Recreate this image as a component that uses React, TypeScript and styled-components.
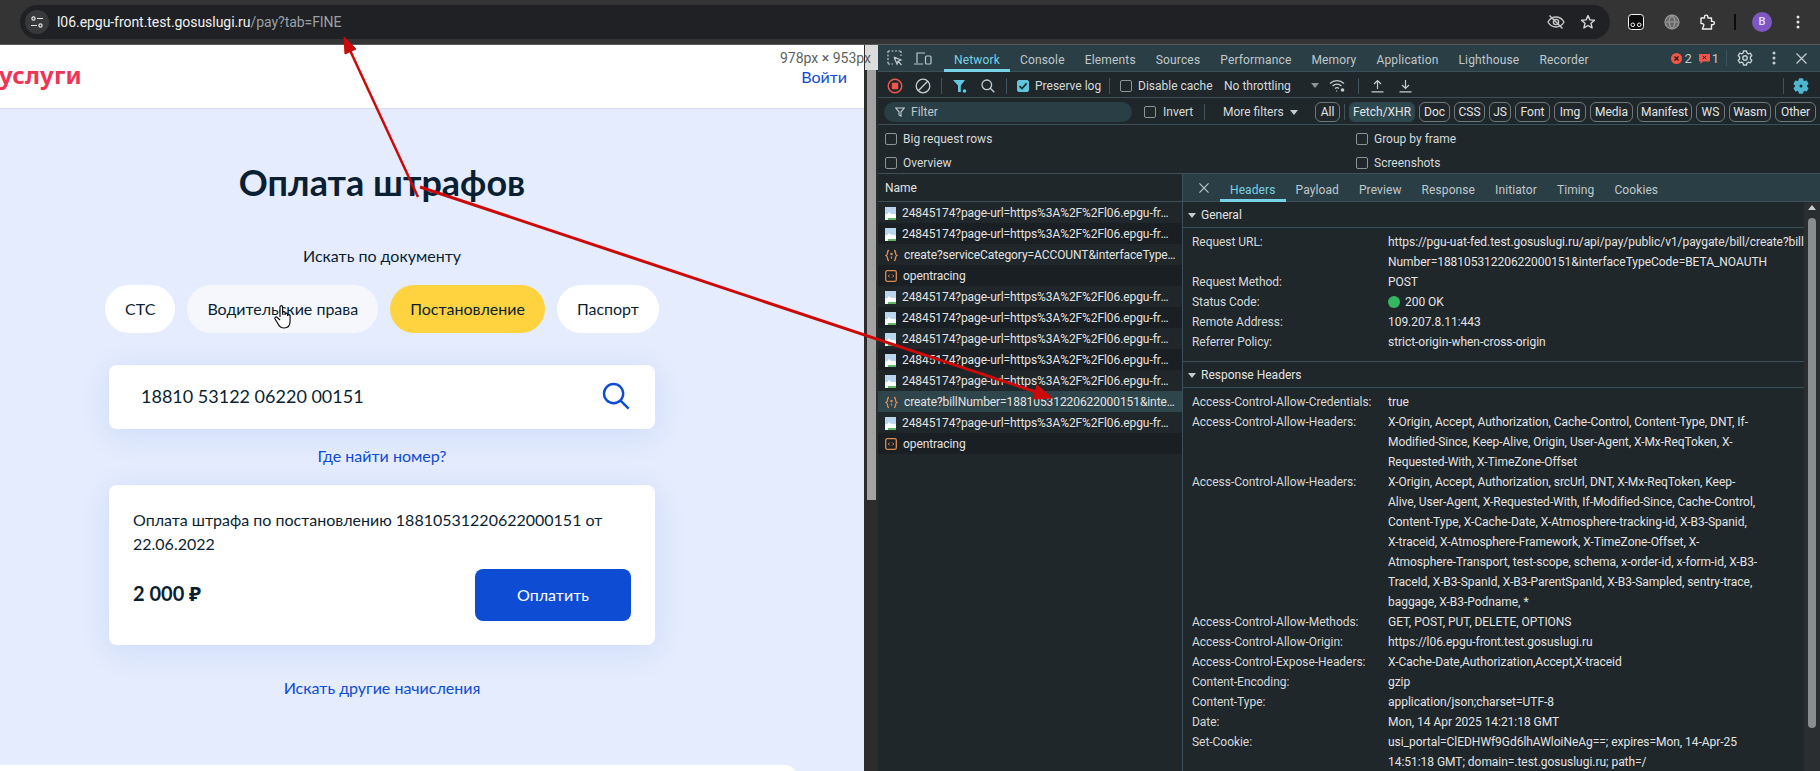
import React from "react";
import styled, { createGlobalStyle } from "styled-components";

const GlobalStyle = createGlobalStyle`
  html, body {
    margin: 0;
    padding: 0;
    width: 1820px;
    height: 771px;
    overflow: hidden;
    background: #2e2e2e;
  }
  * { box-sizing: border-box; }
`;

const UI_FONT = `Roboto, "Noto Sans", sans-serif`;
const PAGE_FONT = `Lato, "Noto Sans", sans-serif`;

const Root = styled.div`
  position: relative;
  width: 1820px;
  height: 771px;
  overflow: hidden;
  font-family: ${UI_FONT};
`;

/* browser chrome */
const BrowserBar = styled.div`
  display: flex;
  align-items: center;
  height: 45px;
  padding: 0 0 1px 20px;
  background: #343434;
  border-bottom: 1px solid #5a5a5a;
`;

const Omnibox = styled.div`
  display: flex;
  align-items: center;
  flex: none;
  width: 1590px;
  height: 34px;
  padding: 0 14px 0 5px;
  background: #202124;
  border-radius: 17px;
  font-size: 14px;
`;

const SiteButton = styled.div`
  display: flex;
  align-items: center;
  justify-content: center;
  width: 24px;
  height: 24px;
  margin-right: 8px;
  border-radius: 50%;
  background: #38393b;
`;

const Host = styled.span`
  color: #f1f1f1;
  letter-spacing: -0.05px;
`;

const UrlPath = styled.span`
  color: #9aa0a6;
  letter-spacing: -0.05px;
`;

const OmniIcons = styled.div`
  display: flex;
  align-items: center;
  gap: 15px;
  margin-left: auto;
`;

const ChromeActions = styled.div`
  display: flex;
  align-items: center;
  margin-left: 16px;
`;

const ChromeSlot = styled.div<{ $w: number; $ml?: number }>`
  display: flex;
  align-items: center;
  justify-content: center;
  width: ${({ $w }) => $w}px;
  margin-left: ${({ $ml = 0 }) => $ml}px;
`;

const Avatar = styled.div`
  display: flex;
  align-items: center;
  justify-content: center;
  width: 20px;
  height: 20px;
  border-radius: 50%;
  background: #7e57c2;
  color: #e8e0f5;
  font-size: 11px;
  font-weight: 500;
`;

const ChromeDivider = styled.div`
  width: 2px;
  height: 16px;
  background: #0c0c0c;
`;

const Workspace = styled.div`
  position: relative;
  display: flex;
  height: 726px;
`;

/* the page on the left */
const Page = styled.div`
  width: 864px;
  height: 726px;
  flex: none;
  overflow: hidden;
  background: #e4ecfd;
  font-family: ${PAGE_FONT};
  color: #0b1f33;
`;

const Header = styled.header`
  display: flex;
  align-items: center;
  justify-content: space-between;
  height: 64px;
  padding: 0 17px 0 0;
  background: #fff;
  border-bottom: 1px solid #d5dff2;
`;

const Logo = styled.div`
  margin: -4px 0 0 -1px;
  color: #ee3556;
  font-family: "Noto Sans", sans-serif;
  font-size: 24px;
  font-weight: 700;
  line-height: 30px;
  letter-spacing: 0.2px;
`;

const Login = styled.a`
  color: #0d4cd3;
  font-size: 16px;
`;

const Main = styled.main`
  display: flex;
  flex-direction: column;
  align-items: center;
  padding-right: 100px;
`;

const Title = styled.h1`
  margin: 51px 0 0;
  font-size: 36px;
  font-weight: 700;
  line-height: 44px;
`;

const SearchLabel = styled.div`
  margin-top: 40px;
  font-size: 16px;
  line-height: 24px;
`;

const Chips = styled.div`
  display: flex;
  gap: 12px;
  margin-top: 17px;
`;

const Chip = styled.div<{ $kind?: "hover" | "active" }>`
  display: flex;
  align-items: center;
  height: 48px;
  padding: 0 20px 2px;
  border-radius: 24px;
  font-size: 16px;
  background: ${({ $kind }) =>
    $kind === "active" ? "#ffd23f" : $kind === "hover" ? "#f5f7fc" : "#fff"};
`;

const Panel = styled.div`
  width: 546px;
  background: #fff;
  border-radius: 8px;
  box-shadow: 0 6px 32px rgba(13, 76, 211, 0.1);
`;

const SearchBox = styled(Panel)`
  display: flex;
  align-items: center;
  justify-content: space-between;
  height: 64px;
  margin-top: 32px;
  padding: 0 25px 3px 32px;
  font-size: 18px;
`;

const TextLink = styled.a<{ $top: number }>`
  margin-top: ${({ $top }) => $top}px;
  color: #0d4cd3;
  font-size: 16px;
  line-height: 24px;
`;

const FineCard = styled(Panel)`
  margin-top: 17px;
  padding: 23px 24px 24px;
`;

const FineText = styled.div`
  font-size: 16px;
  line-height: 24px;
`;

const FineBottom = styled.div`
  display: flex;
  align-items: center;
  justify-content: space-between;
  margin-top: 13px;
`;

const Amount = styled.div`
  padding-bottom: 3px;
  font-size: 20px;
  font-weight: 700;
`;

const PayButton = styled.button`
  width: 156px;
  height: 52px;
  padding-bottom: 3px;
  border: 0;
  border-radius: 8px;
  background: #0d4cd3;
  color: #fff;
  font-family: ${PAGE_FONT};
  font-size: 16px;
`;

const BottomCard = styled.div`
  width: 797px;
  height: 40px;
  margin-top: 65px;
  background: #fff;
  border-radius: 0 12px 0 0;
`;

const PageScroll = styled.div`
  width: 14px;
  flex: none;
  background: #2c2c2c;
`;

const ScrollCap = styled.div`
  height: 25px;
  margin-left: 1px;
  background: #dcdcdc;
`;

const PageThumb = styled.div`
  height: 430px;
  margin-left: 3px;
  width: 9px;
  background: #a3a3a3;
`;

const SizeBadge = styled.div`
  position: absolute;
  top: 5px;
  left: 780px;
  font-size: 14px;
  line-height: 16px;
  white-space: nowrap;
  color: #5f5f5f;
`;

/* devtools */
const DevTools = styled.div`
  flex: 1;
  display: flex;
  flex-direction: column;
  min-width: 0;
  background: #1f272b;
  color: #e3e3e3;
  font-size: 12px;
`;

const TabBar = styled.div`
  display: flex;
  align-items: stretch;
  height: 27px;
  flex: none;
  background: #293e45;
  border-bottom: 1px solid #3b5058;
`;

const Tab = styled.div<{ $active?: boolean; $spacing?: number }>`
  display: flex;
  align-items: center;
  padding: 6px 10px 0;
  color: ${({ $active }) => ($active ? "#77d2e6" : "#c0c8cb")};
  border-bottom: 3px solid ${({ $active }) => ($active ? "#77d2e6" : "transparent")};
  margin-bottom: -1px;
  letter-spacing: ${({ $spacing = 0.16 }) => $spacing}px;
  white-space: nowrap;
`;

const TabIcons = styled.div`
  display: flex;
  align-items: center;
  gap: 11px;
  width: 66px;
  padding-left: 9px;
`;

const TabRight = styled.div`
  display: flex;
  align-items: center;
  margin-left: auto;
  padding-right: 3px;
  color: #c0c8cb;
`;

const Counter = styled.span`
  margin: 0 7px 0 2px;
  font-size: 13px;
`;

const Toolbar = styled.div`
  display: flex;
  align-items: center;
  height: 26px;
  flex: none;
  padding: 2px 0 0 3px;
  border-bottom: 1px solid #3b5058;
`;

const ToolSlot = styled.div<{ $w?: number; $ml?: number }>`
  display: flex;
  align-items: center;
  justify-content: center;
  flex: none;
  width: ${({ $w = 28 }) => $w}px;
  margin-left: ${({ $ml = 0 }) => $ml}px;
`;

const Sep = styled.div<{ $ml?: number }>`
  width: 1px;
  height: 16px;
  flex: none;
  margin-left: ${({ $ml = 0 }) => $ml}px;
  background: #3f545c;
`;

const Check = styled.span<{ $ml?: number; $on?: boolean }>`
  display: inline-flex;
  align-items: center;
  justify-content: center;
  flex: none;
  width: 12px;
  height: 12px;
  margin-left: ${({ $ml = 0 }) => $ml}px;
  border-radius: 2px;
  border: 1px solid ${({ $on }) => ($on ? "#5fc4dc" : "#8c9498")};
  background: ${({ $on }) => ($on ? "#5fc4dc" : "transparent")};
`;

const CheckLabel = styled.span<{ $w?: number; $ml?: number }>`
  flex: none;
  width: ${({ $w }) => ($w ? `${$w}px` : "auto")};
  margin-left: ${({ $ml = 6 }) => $ml}px;
  color: #d5dadc;
  white-space: nowrap;
`;

const DownCaret = styled.span<{ $ml?: number; $color?: string; $up?: boolean }>`
  flex: none;
  width: 0;
  height: 0;
  margin-left: ${({ $ml = 0 }) => $ml}px;
  border-left: 4px solid transparent;
  border-right: 4px solid transparent;
  border-top: 5px solid ${({ $color = "#8c9498" }) => $color};
  transform: ${({ $up }) => ($up ? "rotate(180deg)" : "none")};
`;

const FilterBar = styled(Toolbar)`
  height: 27px;
  padding: 2px 0 0 6px;
`;

const FilterInput = styled.div`
  display: flex;
  align-items: center;
  gap: 6px;
  width: 248px;
  height: 20px;
  padding-left: 11px;
  flex: none;
  border-radius: 10px;
  background: #293e45;
  color: #c0c8cb;
`;

const TypeChip = styled.div<{ $w: number; $ml?: number; $active?: boolean }>`
  display: flex;
  align-items: center;
  justify-content: center;
  flex: none;
  width: ${({ $w }) => $w}px;
  height: 20px;
  margin-left: ${({ $ml = 4 }) => $ml}px;
  border-radius: 6px;
  border: 1px solid ${({ $active }) => ($active ? "#2e4850" : "#6f787c")};
  background: ${({ $active }) => ($active ? "#2e4850" : "transparent")};
  color: #e3e3e3;
  white-space: nowrap;
`;

const Options = styled.div`
  display: grid;
  grid-template-columns: 471px 1fr;
  grid-auto-rows: 24px;
  align-items: center;
  height: 49px;
  flex: none;
  padding-left: 7px;
  padding-top: 2px;
  border-bottom: 1px solid #3b5058;
`;

const OptionItem = styled.div`
  display: flex;
  align-items: center;
`;

const Split = styled.div`
  flex: 1;
  display: flex;
  min-height: 0;
`;

const RequestList = styled.div`
  width: 305px;
  flex: none;
  border-right: 1px solid #3b5058;
`;

const NameHead = styled.div`
  display: flex;
  align-items: center;
  height: 28px;
  padding: 1px 0 0 7px;
  border-bottom: 1px solid #3b5058;
`;

const RequestRow = styled.div<{ $odd: boolean; $selected?: boolean }>`
  display: flex;
  align-items: center;
  gap: 6px;
  height: 21px;
  padding: 1px 0 0 7px;
  background: ${({ $odd, $selected }) =>
    $selected ? "#2f454c" : $odd ? "#1f272b" : "#191f23"};
`;

const RequestName = styled.div`
  width: 273px;
  overflow: hidden;
  text-overflow: ellipsis;
  white-space: nowrap;
  letter-spacing: -0.08px;
`;

const Details = styled.div`
  flex: 1;
  display: flex;
  flex-direction: column;
  min-width: 0;
`;

const DetailTabs = styled(TabBar)`
  height: 28px;
  padding-left: 16px;
  border-bottom: 1px solid #3b5058;
`;

const CloseSlot = styled.div`
  display: flex;
  align-items: center;
  padding-top: 1px;
  width: 21px;
`;

const DetailBody = styled.div`
  flex: 1;
  display: flex;
  min-height: 0;
  overflow: hidden;
`;

const DetailScroll = styled.div`
  flex: 1;
  min-width: 0;
`;

const SectionHead = styled.div`
  display: flex;
  align-items: center;
  gap: 5px;
  height: 26px;
  padding: 1px 0 0 5px;
  border-bottom: 1px solid #3b5058;
`;

const Section = styled.div<{ $last?: boolean }>`
  padding: 4px 0 9px;
  border-bottom: ${({ $last }) => ($last ? "0" : "1px solid #3b5058")};
`;

const HeaderRow = styled.div`
  display: grid;
  grid-template-columns: 196px 1fr;
  padding-left: 9px;
  line-height: 20px;
  letter-spacing: -0.04px;
  white-space: nowrap;
`;

const HeaderKey = styled.div`
  color: #d5dadc;
`;

const HeaderValue = styled.div`
  display: flex;
  flex-direction: column;
  color: #e3e3e3;
`;

const StatusLine = styled.div`
  display: flex;
  align-items: center;
  gap: 5px;
`;

const StatusDot = styled.span`
  width: 12px;
  height: 12px;
  border-radius: 50%;
  background: #34b760;
`;

const RightScroll = styled.div`
  width: 16px;
  flex: none;
  padding-top: 3px;
  background: #2a2e30;
  display: flex;
  flex-direction: column;
  align-items: center;
`;

const RightThumb = styled.div`
  width: 8px;
  height: 510px;
  margin-top: 8px;
  border-radius: 4px;
  background: #8a8d8e;
`;

const OverlayArrows = styled.svg`
  position: absolute;
  inset: 0;
  pointer-events: none;
`;

const HandCursor = styled.svg`
  position: absolute;
  left: 274px;
  top: 304px;
  pointer-events: none;
`;

/* icons */
const SiteIcon = () => (
  <svg width="14" height="14" viewBox="0 0 14 14" fill="none" stroke="#e3e3e3" strokeWidth="1.2">
    <circle cx="3.5" cy="3.5" r="1.6" />
    <path d="M7 3.5h6M1 10.5h6" />
    <circle cx="10.5" cy="10.5" r="1.6" />
  </svg>
);

const EyeOff = () => (
  <svg width="18" height="16" viewBox="0 0 18 16" fill="none" stroke="#c7c7c7" strokeWidth="1.4">
    <path d="M1 8c2-3.4 4.8-5 8-5s6 1.6 8 5c-2 3.4-4.8 5-8 5s-6-1.6-8-5z" />
    <circle cx="9" cy="8" r="2.6" />
    <path d="M2.5 1.5 15.5 14.5" />
  </svg>
);

const Star = () => (
  <svg width="16" height="16" viewBox="0 0 16 16" fill="none" stroke="#d8d8d8" strokeWidth="1.4" strokeLinejoin="round">
    <path d="M8 1.6l1.9 4.3 4.6.4-3.5 3 1.1 4.6L8 11.5l-4.1 2.4L5 9.3l-3.5-3 4.6-.4z" />
  </svg>
);

const ExtensionBox = () => (
  <svg width="16" height="16" viewBox="0 0 16 16">
    <rect x="0.5" y="0.5" width="15" height="15" rx="3" fill="#0b0b0b" stroke="#f5f5f5" />
    <circle cx="4.8" cy="10.8" r="1.8" fill="none" stroke="#f5f5f5" />
    <circle cx="11.2" cy="10.8" r="1.8" fill="none" stroke="#f5f5f5" />
  </svg>
);

const Globe = () => (
  <svg width="16" height="16" viewBox="0 0 16 16" fill="#6a6a6a" stroke="#9a9a9a" strokeWidth="1.2">
    <circle cx="8" cy="8" r="7" />
    <path d="M1 8h14M8 1c-4 4-4 10 0 14M8 1c4 4 4 10 0 14" fill="none" />
  </svg>
);

const Puzzle = () => (
  <svg width="16" height="16" viewBox="0 0 16 16" fill="none" stroke="#f0f0f0" strokeWidth="1.4" strokeLinejoin="round">
    <path d="M1 4h3.5V2.8a1.7 1.7 0 013.4 0V4h3.6v3.4h1.2a1.7 1.7 0 010 3.4h-1.2v4.2H2.4L3.6 12a1.6 1.6 0 00-1-2.4H1z" />
  </svg>
);

const VDots = ({ color = "#e3e3e3" }: { color?: string }) => (
  <svg width="4" height="14" viewBox="0 0 4 14" fill={color}>
    <circle cx="2" cy="2" r="1.5" />
    <circle cx="2" cy="7" r="1.5" />
    <circle cx="2" cy="12" r="1.5" />
  </svg>
);

const InspectIcon = () => (
  <svg width="16" height="16" viewBox="0 0 16 16" fill="none" stroke="#bfc7ca" strokeWidth="1.2">
    <path d="M1 1h13M1 1v13M14 1v5M1 14h5" strokeDasharray="2 1.5" />
    <path d="M7 7l7 3-3 1.2L14.5 15M7 7l3 7 1-2.8" />
  </svg>
);

const DeviceIcon = () => (
  <svg width="18" height="15" viewBox="0 0 18 15" fill="none" stroke="#bfc7ca" strokeWidth="1.2">
    <path d="M3 12V2h8M0 13h9" />
    <rect x="11.5" y="5" width="5.5" height="8" rx="1" />
  </svg>
);

const ErrorBadge = () => (
  <svg width="11" height="11" viewBox="0 0 11 11">
    <circle cx="5.5" cy="5.5" r="5.5" fill="#f0564a" />
    <path d="M3.5 3.5l4 4M7.5 3.5l-4 4" stroke="#2a1513" strokeWidth="1.2" />
  </svg>
);

const IssueBadge = () => (
  <svg width="11" height="11" viewBox="0 0 11 11">
    <path d="M0 1h11v7.5H4L1.5 11V8.5H0z" fill="#f0564a" />
    <path d="M3.8 3l3.4 3M7.2 3L3.8 6" stroke="#2a1513" />
  </svg>
);

const Gear = ({ color = "#c5cdd0", fill = "none" }: { color?: string; fill?: string }) => (
  <svg width="16" height="16" viewBox="0 0 16 16" fill={fill} stroke={color} strokeWidth="1.4" strokeLinejoin="round">
    <path d="M6.5 1h3l.4 1.9 1.5.9 1.9-.6 1.5 2.6-1.4 1.3v1.8l1.4 1.3-1.5 2.6-1.9-.6-1.5.9-.4 1.9h-3l-.4-1.9-1.5-.9-1.9.6-1.5-2.6 1.4-1.3V7.100L1.2 5.800l1.5-2.6 1.9.6 1.5-.9z" />
    <circle cx="8" cy="8" r="2.2" fill={fill === "none" ? "none" : "#1f272b"} />
  </svg>
);

const CloseX = ({ size = 11 }: { size?: number }) => (
  <svg width={size} height={size} viewBox="0 0 11 11" stroke="#c5cdd0" strokeWidth="1.2">
    <path d="M.5.5l10 10M10.5.5l-10 10" />
  </svg>
);

const RecordIcon = () => (
  <svg width="16" height="16" viewBox="0 0 16 16">
    <circle cx="8" cy="8" r="6.8" fill="none" stroke="#f0564a" strokeWidth="1.5" />
    <rect x="4.8" y="4.8" width="6.4" height="6.4" rx="1" fill="#f0564a" />
  </svg>
);

const ClearIcon = () => (
  <svg width="16" height="16" viewBox="0 0 16 16" fill="none" stroke="#c5cdd0" strokeWidth="1.3">
    <circle cx="8" cy="8" r="6.8" />
    <path d="M3.3 12.7 12.7 3.3" />
  </svg>
);

const FunnelSolid = () => (
  <svg width="16" height="16" viewBox="0 0 16 16" fill="#62c8e0">
    <path d="M1 2h12L8.8 7.5V14H6V7.5z" />
    <circle cx="12.5" cy="13" r="1.8" />
  </svg>
);

const SearchGlass = ({ size = 14, color = "#c5cdd0", w = 1.3 }: { size?: number; color?: string; w?: number }) => (
  <svg width={size} height={size} viewBox="0 0 14 14" fill="none" stroke={color} strokeWidth={w}>
    <circle cx="5.8" cy="5.8" r="4.8" />
    <path d="M9.3 9.3 13.3 13.3" />
  </svg>
);

const CheckMark = () => (
  <svg width="10" height="10" viewBox="0 0 10 10" fill="none" stroke="#1b2a2f" strokeWidth="1.6">
    <path d="M1.5 5.2 4 7.6 8.6 2.4" />
  </svg>
);

const WifiGear = () => (
  <svg width="18" height="14" viewBox="0 0 18 14" fill="none" stroke="#c5cdd0" strokeWidth="1.2">
    <path d="M1 4.5a10 10 0 0 1 14 0M3.5 7a6.5 6.5 0 0 1 9 0M6 9.5a3 3 0 0 1 4 0" />
    <circle cx="13.5" cy="11" r="1.8" fill="#c5cdd0" stroke="none" />
    <path d="M7 12h1.2" />
  </svg>
);

const UploadIcon = () => (
  <svg width="13" height="14" viewBox="0 0 13 14" fill="none" stroke="#c5cdd0" strokeWidth="1.2">
    <path d="M6.5 10V1.5M3 5l3.5-3.5L10 5M.5 12.8h12" />
  </svg>
);

const DownloadIcon = () => (
  <svg width="13" height="14" viewBox="0 0 13 14" fill="none" stroke="#c5cdd0" strokeWidth="1.2">
    <path d="M6.5 1v8.5M3 6l3.5 3.5L10 6M.5 12.8h12" />
  </svg>
);

const FunnelOutline = () => (
  <svg width="10" height="10" viewBox="0 0 10 10" fill="none" stroke="#c5cdd0" strokeWidth="1.1">
    <path d="M.8 1h8.4L6 4.8V9L4 8V4.8z" />
  </svg>
);

const ImageFileIcon = () => (
  <svg width="11" height="13" viewBox="0 0 11 13">
    <rect width="11" height="13" fill="#eef3f9" />
    <path d="M0 0h11v7H0z" fill="#b9d6ee" />
    <path d="M1 9l3-4 2.5 2.5L8 6.5l3 3V11H1z" fill="#fff" />
    <path d="M3 11h8v2H3z" fill="#62b565" />
  </svg>
);

const XhrIcon = () => (
  <svg width="13" height="13" viewBox="0 0 13 13" fill="none" stroke="#e08a56" strokeWidth="1.3">
    <path d="M4 1.5C2.5 1.5 2.5 2.5 2.5 4S2.5 5.8 1 6.5C2.5 7.2 2.5 7.5 2.5 9s0 2.5 1.5 2.5M9 1.5c1.5 0 1.5 1 1.5 2.500s0 1.800 1.500 2.500c-1.500.7-1.500 1-1.500 2.500s0 2.500-1.500 2.500" />
    <circle cx="6.5" cy="5" r=".6" fill="#e08a56" />
    <path d="M6.5 7.5v2" />
  </svg>
);

const TraceIcon = () => (
  <svg width="12" height="12" viewBox="0 0 12 12" fill="none" stroke="#e08a56" strokeWidth="1.3">
    <rect x=".7" y=".7" width="10.6" height="10.6" rx="1.5" />
    <path d="M4.8 4.5 3.3 6l1.5 1.5M7.2 4.5 8.7 6 7.2 7.5" strokeWidth="1" />
  </svg>
);

const SmallTriangle = () => <DownCaret $color="#c5cdd0" />;

const FILE_URL = "24845174?page-url=https%3A%2F%2Fl06.epgu-front.test.gosuslugi.ru%2Fpay%3Ftab%3DFINE";

type Req = { kind: "img" | "xhr" | "trace"; name: string; selected?: boolean };

const requests: Req[] = [
  { kind: "img", name: FILE_URL },
  { kind: "img", name: FILE_URL },
  { kind: "xhr", name: "create?serviceCategory=ACCOUNT&interfaceTypeCode=BETA_NOAUTH" },
  { kind: "trace", name: "opentracing" },
  { kind: "img", name: FILE_URL },
  { kind: "img", name: FILE_URL },
  { kind: "img", name: FILE_URL },
  { kind: "img", name: FILE_URL },
  { kind: "img", name: FILE_URL },
  { kind: "xhr", name: "create?billNumber=18810531220622000151&interfaceTypeCode=BETA_NOAUTH", selected: true },
  { kind: "img", name: FILE_URL },
  { kind: "trace", name: "opentracing" },
];

const mainTabs = ["Console", "Elements", "Sources", "Performance", "Memory", "Application", "Lighthouse", "Recorder"];
const detailTabs = ["Payload", "Preview", "Response", "Initiator", "Timing", "Cookies"];

const typeChips: { label: string; w: number; active?: boolean }[] = [
  { label: "Fetch/XHR", w: 66, active: true },
  { label: "Doc", w: 31 },
  { label: "CSS", w: 31 },
  { label: "JS", w: 22 },
  { label: "Font", w: 35 },
  { label: "Img", w: 32 },
  { label: "Media", w: 43 },
  { label: "Manifest", w: 55 },
  { label: "WS", w: 29 },
  { label: "Wasm", w: 42 },
  { label: "Other", w: 41 },
];

const generalRows: [string, string[]][] = [
  ["Request URL:", [
    "https://pgu-uat-fed.test.gosuslugi.ru/api/pay/public/v1/paygate/bill/create?bill",
    "Number=18810531220622000151&interfaceTypeCode=BETA_NOAUTH",
  ]],
  ["Request Method:", ["POST"]],
];

const generalRowsTail: [string, string[]][] = [
  ["Remote Address:", ["109.207.8.11:443"]],
  ["Referrer Policy:", ["strict-origin-when-cross-origin"]],
];

const responseRows: [string, string[]][] = [
  ["Access-Control-Allow-Credentials:", ["true"]],
  ["Access-Control-Allow-Headers:", [
    "X-Origin, Accept, Authorization, Cache-Control, Content-Type, DNT, If-",
    "Modified-Since, Keep-Alive, Origin, User-Agent, X-Mx-ReqToken, X-",
    "Requested-With, X-TimeZone-Offset",
  ]],
  ["Access-Control-Allow-Headers:", [
    "X-Origin, Accept, Authorization, srcUrl, DNT, X-Mx-ReqToken, Keep-",
    "Alive, User-Agent, X-Requested-With, If-Modified-Since, Cache-Control,",
    "Content-Type, X-Cache-Date, X-Atmosphere-tracking-id, X-B3-Spanid,",
    "X-traceid, X-Atmosphere-Framework, X-TimeZone-Offset, X-",
    "Atmosphere-Transport, test-scope, schema, x-order-id, x-form-id, X-B3-",
    "TraceId, X-B3-SpanId, X-B3-ParentSpanId, X-B3-Sampled, sentry-trace,",
    "baggage, X-B3-Podname, *",
  ]],
  ["Access-Control-Allow-Methods:", ["GET, POST, PUT, DELETE, OPTIONS"]],
  ["Access-Control-Allow-Origin:", ["https://l06.epgu-front.test.gosuslugi.ru"]],
  ["Access-Control-Expose-Headers:", ["X-Cache-Date,Authorization,Accept,X-traceid"]],
  ["Content-Encoding:", ["gzip"]],
  ["Content-Type:", ["application/json;charset=UTF-8"]],
  ["Date:", ["Mon, 14 Apr 2025 14:21:18 GMT"]],
  ["Set-Cookie:", [
    "usi_portal=ClEDHWf9Gd6lhAWloiNeAg==; expires=Mon, 14-Apr-25",
    "14:51:18 GMT; domain=.test.gosuslugi.ru; path=/",
  ]],
];

const HeaderLines = ({ rows }: { rows: [string, string[]][] }) => (
  <>
    {rows.map(([key, lines], i) => (
      <HeaderRow key={i}>
        <HeaderKey>{key}</HeaderKey>
        <HeaderValue>
          {lines.map((l) => (
            <span key={l}>{l}</span>
          ))}
        </HeaderValue>
      </HeaderRow>
    ))}
  </>
);

const App: React.FC = () => {
  return (
    <Root>
      <GlobalStyle />
      <BrowserBar>
        <Omnibox>
          <SiteButton><SiteIcon /></SiteButton>
          <Host>l06.epgu-front.test.gosuslugi.ru</Host>
          <UrlPath>/pay?tab=FINE</UrlPath>
          <OmniIcons>
            <EyeOff />
            <Star />
          </OmniIcons>
        </Omnibox>
        <ChromeActions>
          <ChromeSlot $w={20}><ExtensionBox /></ChromeSlot>
          <ChromeSlot $w={52}><Globe /></ChromeSlot>
          <ChromeSlot $w={20}><Puzzle /></ChromeSlot>
          <ChromeSlot $w={34}><ChromeDivider /></ChromeSlot>
          <ChromeSlot $w={20}><Avatar>B</Avatar></ChromeSlot>
          <ChromeSlot $w={20} $ml={16}><VDots /></ChromeSlot>
        </ChromeActions>
      </BrowserBar>

      <Workspace>
        <Page>
          <Header>
            <Logo>услуги</Logo>
            <Login>Войти</Login>
          </Header>
          <Main>
            <Title>Оплата штрафов</Title>
            <SearchLabel>Искать по документу</SearchLabel>
            <Chips>
              <Chip>СТС</Chip>
              <Chip $kind="hover">Водительские права</Chip>
              <Chip $kind="active">Постановление</Chip>
              <Chip>Паспорт</Chip>
            </Chips>
            <SearchBox>
              18810 53122 06220 00151
              <SearchGlass size={28} color="#0d4cd3" w={1.2} />
            </SearchBox>
            <TextLink $top={15}>Где найти номер?</TextLink>
            <FineCard>
              <FineText>Оплата штрафа по постановлению 18810531220622000151 от 22.06.2022</FineText>
              <FineBottom>
                <Amount>2 000 ₽</Amount>
                <PayButton>Оплатить</PayButton>
              </FineBottom>
            </FineCard>
            <TextLink $top={31}>Искать другие начисления</TextLink>
          </Main>
          <BottomCard />
        </Page>

        <PageScroll>
          <ScrollCap />
          <PageThumb />
        </PageScroll>
        <SizeBadge>978px × 953px</SizeBadge>

        <DevTools>
          <TabBar>
            <TabIcons>
              <InspectIcon />
              <DeviceIcon />
            </TabIcons>
            <Tab $active>Network</Tab>
            {mainTabs.map((t) => (
              <Tab key={t}>{t}</Tab>
            ))}
            <TabRight>
              <ErrorBadge />
              <Counter>2</Counter>
              <IssueBadge />
              <Counter>1</Counter>
              <Sep />
              <ToolSlot $w={36}><Gear /></ToolSlot>
              <ToolSlot $w={22}><VDots color="#c5cdd0" /></ToolSlot>
              <ToolSlot $w={32}><CloseX /></ToolSlot>
            </TabRight>
          </TabBar>

          <Toolbar>
            <ToolSlot><RecordIcon /></ToolSlot>
            <ToolSlot><ClearIcon /></ToolSlot>
            <Sep $ml={4} />
            <ToolSlot $ml={4}><FunnelSolid /></ToolSlot>
            <ToolSlot><SearchGlass /></ToolSlot>
            <Sep $ml={4} />
            <Check $ml={10} $on><CheckMark /></Check>
            <CheckLabel $w={74}>Preserve log</CheckLabel>
            <Sep />
            <Check $ml={10} />
            <CheckLabel $w={86}>Disable cache</CheckLabel>
            <CheckLabel $w={87} $ml={0}>No throttling</CheckLabel>
            <DownCaret />
            <ToolSlot $w={24} $ml={7}><WifiGear /></ToolSlot>
            <Sep $ml={8} />
            <ToolSlot $ml={4}><UploadIcon /></ToolSlot>
            <ToolSlot><DownloadIcon /></ToolSlot>
            <Sep $ml={364} />
            <ToolSlot $ml={3}><Gear color="#4fb6d0" fill="#4fb6d0" /></ToolSlot>
          </Toolbar>

          <FilterBar>
            <FilterInput>
              <FunnelOutline />
              Filter
            </FilterInput>
            <Check $ml={12} />
            <CheckLabel $w={41} $ml={7}>Invert</CheckLabel>
            <Sep />
            <CheckLabel $w={61} $ml={18}>More filters</CheckLabel>
            <DownCaret $ml={6} $color="#c5cdd0" />
            <TypeChip $w={25} $ml={17}>All</TypeChip>
            <Sep $ml={4} />
            {typeChips.map((c) => (
              <TypeChip key={c.label} $w={c.w} $active={c.active}>{c.label}</TypeChip>
            ))}
          </FilterBar>

          <Options>
            <OptionItem><Check /><CheckLabel>Big request rows</CheckLabel></OptionItem>
            <OptionItem><Check /><CheckLabel>Group by frame</CheckLabel></OptionItem>
            <OptionItem><Check /><CheckLabel>Overview</CheckLabel></OptionItem>
            <OptionItem><Check /><CheckLabel>Screenshots</CheckLabel></OptionItem>
          </Options>

          <Split>
            <RequestList>
              <NameHead>Name</NameHead>
              {requests.map((r, i) => (
                <RequestRow key={i} $odd={i % 2 === 0} $selected={r.selected}>
                  {r.kind === "img" && <ImageFileIcon />}
                  {r.kind === "xhr" && <XhrIcon />}
                  {r.kind === "trace" && <TraceIcon />}
                  <RequestName>{r.name}</RequestName>
                </RequestRow>
              ))}
            </RequestList>
            <Details>
              <DetailTabs>
                <CloseSlot><CloseX size={10} /></CloseSlot>
                <Tab $active $spacing={0.1}>Headers</Tab>
                {detailTabs.map((t) => (
                  <Tab key={t} $spacing={0.1}>{t}</Tab>
                ))}
              </DetailTabs>
              <DetailBody>
                <DetailScroll>
                  <SectionHead><SmallTriangle />General</SectionHead>
                  <Section>
                    <HeaderLines rows={generalRows} />
                    <HeaderRow>
                      <HeaderKey>Status Code:</HeaderKey>
                      <StatusLine><StatusDot />200 OK</StatusLine>
                    </HeaderRow>
                    <HeaderLines rows={generalRowsTail} />
                  </Section>
                  <SectionHead><SmallTriangle />Response Headers</SectionHead>
                  <Section $last>
                    <HeaderLines rows={responseRows} />
                  </Section>
                </DetailScroll>
                <RightScroll>
                  <DownCaret $up $color="#c5cdd0" />
                  <RightThumb />
                </RightScroll>
              </DetailBody>
            </Details>
          </Split>
        </DevTools>
      </Workspace>

      <OverlayArrows width="1820" height="771" viewBox="0 0 1820 771">
        <g fill="#cc0a0a" stroke="#cc0a0a">
          <path d="M418 197 348 46" strokeWidth="2.5" fill="none" />
          <path d="M344 37 356 49 345 54z" strokeWidth="1" />
          <path d="M420 187 1036 392" strokeWidth="3" fill="none" />
          <path d="M1052 398 1033 399 1037 385z" strokeWidth="1" />
        </g>
      </OverlayArrows>

      <HandCursor width="18" height="25" viewBox="0 0 18 25">
        <path
          d="M6 13V3a1.3 1.3 0 0 1 2.6 0v7M8.6 10V8.5a1.3 1.3 0 0 1 2.5 0V11M11.1 10a1.3 1.3 0 0 1 2.5 0v2M13.6 11.5a1.3 1.3 0 0 1 2.5 0V17c0 4-2 7-6 7-3.5 0-5-2-6-4l-3-5c-.8-1.5 1-2.7 2.2-1.5L6 16"
          fill="#fff"
          stroke="#111"
          strokeWidth="1.2"
        />
      </HandCursor>
    </Root>
  );
};

export default App;
